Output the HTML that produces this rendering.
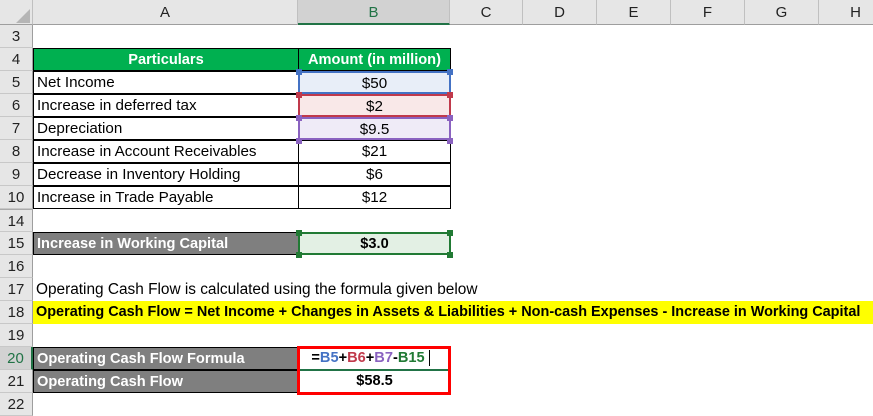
<!DOCTYPE html>
<html><head><style>
body{margin:0;width:873px;height:416px;overflow:hidden;background:#fff;font-family:"Liberation Sans",Arial,sans-serif;position:relative}
div{position:absolute;box-sizing:border-box}
.ch{top:0;height:25px;background:#e6e6e6;border-right:1px solid #c0c0c0;border-bottom:1px solid #9e9e9e;text-align:center;line-height:25px;font-size:15px;color:#222}
.rn{left:0;width:33px;height:23px;background:#e6e6e6;border-bottom:1px solid #c8c8c8;border-right:1px solid #9e9e9e;text-align:center;line-height:23px;font-size:15px;color:#222}
.c{height:23px;line-height:23px;font-size:15.2px;color:#000;white-space:nowrap}
.a{left:33px;width:266px;padding-left:3px}
.b{left:298px;width:153px;text-align:center}
.bd{border:1px solid #000;line-height:22px}
.g{background:#7f7f7f;color:#fff;font-weight:bold;font-size:14.6px}
.h{width:6px;height:6px}
</style></head><body>
<div class="ch" style="left:0;width:33px"></div>
<svg style="position:absolute;left:16px;top:9px" width="14" height="14"><polygon points="14,0 14,14 0,14" fill="#b5b5b5"/></svg>
<div class="ch" style="left:33px;width:265px">A</div>
<div class="ch" style="left:298px;width:152px;background:#d2d2d2;border-bottom:2px solid #217346;color:#217346">B</div>
<div class="ch" style="left:450px;width:73px">C</div>
<div class="ch" style="left:523px;width:74px">D</div>
<div class="ch" style="left:597px;width:74px">E</div>
<div class="ch" style="left:671px;width:74px">F</div>
<div class="ch" style="left:745px;width:74px">G</div>
<div class="ch" style="left:819px;width:74px">H</div>

<div class="rn" style="top:25px">3</div>
<div class="rn" style="top:48px">4</div>
<div class="rn" style="top:71px">5</div>
<div class="rn" style="top:94px">6</div>
<div class="rn" style="top:117px">7</div>
<div class="rn" style="top:140px">8</div>
<div class="rn" style="top:163px">9</div>
<div class="rn" style="top:186px">10</div>
<div class="rn" style="top:209px;border-top:1px solid #aaa">14</div>
<div class="rn" style="top:232px">15</div>
<div class="rn" style="top:255px">16</div>
<div class="rn" style="top:278px">17</div>
<div class="rn" style="top:301px">18</div>
<div class="rn" style="top:324px">19</div>
<div class="rn" style="top:347px;background:#d2d2d2;border-right:2px solid #217346;color:#217346">20</div>
<div class="rn" style="top:370px">21</div>
<div class="rn" style="top:393px">22</div>

<div class="c a bd" style="top:48px;background:#00b050;color:#fff;font-weight:bold;text-align:center;padding:0;font-size:14.6px">Particulars</div>
<div class="c b bd" style="top:48px;background:#00b050;color:#fff;font-weight:bold;font-size:14.6px">Amount (in million)</div>

<div class="c a bd" style="top:71px">Net Income</div>
<div class="c b bd" style="top:71px;background:#e8eef8;border:2px solid #4472c4">$50</div>
<div class="c a bd" style="top:94px">Increase in deferred tax</div>
<div class="c b bd" style="top:94px;background:#f9e8e8;border:2px solid #c0394b">$2</div>
<div class="c a bd" style="top:117px">Depreciation</div>
<div class="c b bd" style="top:117px;background:#efebf7;border:2px solid #8a62c0">$9.5</div>
<div class="c a bd" style="top:140px">Increase in Account Receivables</div>
<div class="c b bd" style="top:140px">$21</div>
<div class="c a bd" style="top:163px">Decrease in Inventory Holding</div>
<div class="c b bd" style="top:163px">$6</div>
<div class="c a bd" style="top:186px">Increase in Trade Payable</div>
<div class="c b bd" style="top:186px">$12</div>

<div class="h" style="left:296px;top:69px;background:#4472c4"></div><div class="h" style="left:447px;top:69px;background:#4472c4"></div>
<div class="h" style="left:296px;top:92px;background:#c0394b"></div><div class="h" style="left:447px;top:92px;background:#c0394b"></div>
<div class="h" style="left:296px;top:115px;background:#8a62c0"></div><div class="h" style="left:447px;top:115px;background:#8a62c0"></div>
<div class="h" style="left:296px;top:138px;background:#8a62c0"></div><div class="h" style="left:447px;top:138px;background:#8a62c0"></div>

<div class="c a bd g" style="top:232px">Increase in Working Capital</div>
<div class="c b" style="top:232px;background:#e3f0e4;border:2px solid #217a34;font-weight:bold;font-size:14.6px;line-height:20px">$3.0</div>
<div class="h" style="left:296px;top:230px;background:#217a34"></div><div class="h" style="left:447px;top:230px;background:#217a34"></div>
<div class="h" style="left:296px;top:252px;background:#217a34"></div><div class="h" style="left:447px;top:252px;background:#217a34"></div>

<div class="c" style="left:33px;top:278px;padding-left:3px;font-size:15.4px">Operating Cash Flow is calculated using the formula given below</div>
<div class="c" style="left:33px;top:301px;width:840px;height:23px;background:#ffff00;padding-left:3px;font-weight:bold;font-size:14.45px">Operating Cash Flow = Net Income + Changes in Assets &amp; Liabilities + Non-cash Expenses - Increase in Working Capital</div>

<div class="c a bd g" style="top:347px">Operating Cash Flow Formula</div>
<div class="c b" style="top:347px;font-weight:bold;font-size:14.6px"><span style="margin-left:-8px">=</span><span style="color:#4472c4">B5</span>+<span style="color:#c0394b">B6</span>+<span style="color:#8a62c0">B7</span>-<span style="color:#217a34">B15</span><span style="display:inline-block;width:1px;height:16px;background:#000;vertical-align:middle;margin-left:4px"></span></div>
<div class="c a bd g" style="top:370px">Operating Cash Flow</div>
<div class="c b" style="top:370px;font-weight:bold;font-size:14.6px">$58.5</div>
<div style="left:298px;top:369px;width:152px;height:2px;background:#217346"></div>
<div style="left:297px;top:346px;width:154px;height:49px;border:3px solid #ff0000"></div>
</body></html>
